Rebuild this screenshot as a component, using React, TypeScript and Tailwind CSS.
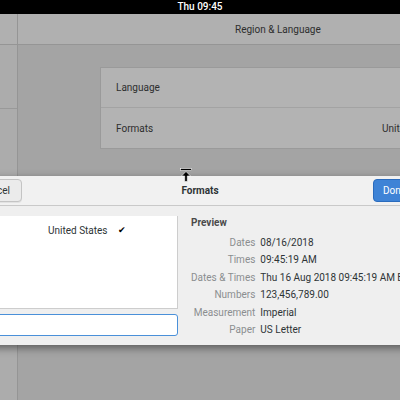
import React from "react";

const rows: [string, string][] = [
  ["Dates", "08/16/2018"],
  ["Times", "09:45:19 AM"],
  ["Dates & Times", "Thu 16 Aug 2018 09:45:19 AM BST"],
  ["Numbers", "123,456,789.00"],
  ["Measurement", "Imperial"],
  ["Paper", "US Letter"],
];

function CursorIcon() {
  return (
    <svg width="12" height="14" viewBox="0 0 12 14" className="absolute left-[180px] top-[168px]">
      <rect x="0.5" y="0.5" width="11" height="2" fill="#000" stroke="#fff" strokeWidth="0.6" />
      <path d="M6 3.5 L10.5 8 L7.3 8 L7.3 13.5 L4.7 13.5 L4.7 8 L1.5 8 Z" fill="#000" stroke="#fff" strokeWidth="0.6" />
    </svg>
  );
}

export default function App() {
  return (
    <div
      className="relative w-[400px] h-[400px] overflow-hidden bg-[#a4a4a4] text-[10px]"
      style={{ fontFamily: 'Roboto, "Noto Sans", sans-serif' }}
    >
      {/* top bar */}
      <div className="h-[14px] bg-black flex items-center justify-center text-white text-[10px] leading-none font-medium">
        Thu 09:45
      </div>

      {/* settings window */}
      <div className="flex h-[31px] bg-[#b0b0b0] border-b border-[#959595]">
        <div className="w-[18px] shrink-0 border-r border-[#959595]" />
        <div className="flex-1 min-w-0 flex items-center pl-[217px] text-[#2e2e2e] whitespace-nowrap">Region &amp; Language</div>
      </div>
      <div className="flex h-[355px]">
        <div className="w-[18px] shrink-0 bg-[#acacac] border-r border-[#959595]">
          <div className="h-[64px] border-b border-[#999]" />
        </div>
        <div className="flex-1 min-w-0 pt-[22px] pl-[82px] overflow-hidden">
          <div className="bg-[#b3b3b3] border border-[#9a9a9a] border-r-0 text-[#2e2e2e]">
            <div className="h-[40px] flex items-center pl-[15px] border-b border-[#a3a3a3]">Language</div>
            <div className="h-[40px] flex items-center pl-[15px]">
              <span className="w-[266px] shrink-0">Formats</span>
              <span className="whitespace-nowrap">United States</span>
            </div>
          </div>
        </div>
      </div>

      {/* dialog */}
      <div className="absolute top-[176px] left-[-100px] w-[600px] h-[169px] bg-[#efefef] shadow-[0_3px_8px_rgba(0,0,0,0.45)] text-[#2e3436]">
        <div className="h-[30px] grid grid-cols-[1fr_auto_1fr] items-center px-[4px] border-b border-[#c9c9c9] bg-[#f1f1f1]">
          <div className="w-[118px] flex justify-end">
            <div className="h-[23px] px-[11px] flex items-center rounded-[4px] border border-[#c4c4c4] bg-[#ebebeb] shadow-[0_1px_0_rgba(0,0,0,0.06)]">
              Cancel
            </div>
          </div>
          <div className="font-bold">Formats</div>
          <div className="w-[123px] justify-self-end flex">
            <div className="h-[23px] px-[9px] flex items-center rounded-[4px] border border-[#2a6bbd] bg-[#3e83d6] text-white">
              Done
            </div>
          </div>
        </div>
        <div className="flex">
          <div className="w-[278px] flex flex-col pt-[10px]">
            <div className="h-[93px] bg-white border-r border-b border-[#cdcdcd]">
              <div className="flex items-center pl-[148px] h-[29px]">
                <span>United States</span>
                <span className="ml-[10px] text-[9px] text-black">✔</span>
              </div>
            </div>
            <div className="mt-[5px] h-[22px] bg-white border border-[#4a90d9] rounded-[3px]" />
          </div>
          <div className="pl-[13px] pt-[9px]">
            <div className="font-bold text-[#4a4a4a] mb-[4px]">Preview</div>
            <div className="grid grid-cols-[auto_auto] gap-x-[5px] leading-[17.4px]">
              {rows.map(([k, v]) => (
                <React.Fragment key={k}>
                  <span className="text-right text-[#8b8e8f] whitespace-nowrap">{k}</span>
                  <span className="whitespace-nowrap">{v}</span>
                </React.Fragment>
              ))}
            </div>
          </div>
        </div>
      </div>

      <CursorIcon />
    </div>
  );
}
